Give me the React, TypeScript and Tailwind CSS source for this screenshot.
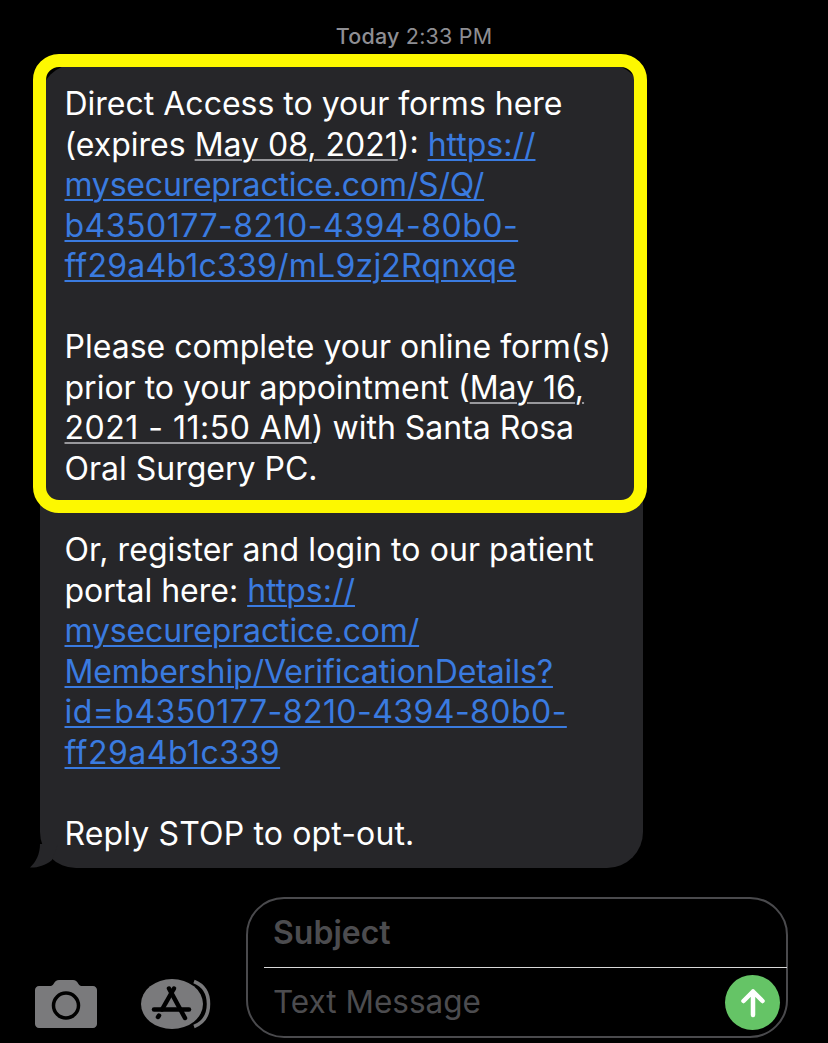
import React from "react";

const Link = ({ children, className = "" }: { children: React.ReactNode; className?: string }) => (
  <span className={`text-[#3a7be0] underline decoration-[2px] underline-offset-[3px] ${className}`}>{children}</span>
);
const DateLink = ({ children, className = "" }: { children: React.ReactNode; className?: string }) => (
  <span className={`underline decoration-[#98989c] decoration-[2px] underline-offset-[3px] ${className}`}>{children}</span>
);

function Camera() {
  return (
    <svg width="62" height="48" viewBox="0 0 62 48" className="block">
      <path
        d="M4 6h11c1.500 0 2.500-.6 3.500-2C20 1.500 21.500 0 24 0h14c2.500 0 4 1.500 5.500 4C44.500 5.400 45.500 6 47 6h11c2.200 0 4 1.800 4 4v34c0 2.200-1.800 4-4 4H4c-2.200 0-4-1.800-4-4V10c0-2.200 1.800-4 4-4z"
        fill="#7a7a7c"
      />
      <circle cx="31" cy="25.500" r="12.500" fill="none" stroke="#000" strokeWidth="3.500" />
    </svg>
  );
}

function AppStore() {
  return (
    <svg width="70" height="50" viewBox="0 0 70 50" className="block">
      <path d="M53 2.500C62 6 67.500 14 67.500 25S62 44 53 47.500" fill="none" stroke="#7a7a7c" strokeWidth="3.500" />
      <ellipse cx="31" cy="25" rx="31" ry="25" fill="#7a7a7c" />
      <g stroke="#000" strokeLinecap="round" fill="none" strokeWidth="4.500">
        <path d="M33 9.500 L21 30.500" />
        <path d="M28 9.500 L44 39" />
        <path d="M13 30.500 H 48" />
        <path d="M18 36.500 L17 38" />
      </g>
    </svg>
  );
}

export default function App() {
  return (
    <div
      className="w-[828px] h-[1043px] bg-black overflow-hidden flex flex-col text-white"
      style={{ fontFamily: "Inter, 'Liberation Sans', sans-serif" }}
    >
      <div className="pt-[23px] h-[64px] text-center text-[21.500px] leading-[26px] text-[#8e8e93] tracking-[0.2px]">
        <span className="font-medium">Today</span> 2:33 PM
      </div>

      <div className="pl-[40px]">
        <div className="relative w-[603px] h-[804px] bg-[#262629] rounded-[36px] pl-[24.500px] pt-[20px] text-[32px] leading-[40.55px] whitespace-nowrap">
          <svg width="30" height="24" viewBox="0 0 30 24" className="absolute left-[-12px] bottom-0">
            <path d="M12 0 C12 10 8 18 2 23.500 C8 24 17 22 24 16 L30 0 Z" fill="#262629" />
          </svg>
          <div className="absolute left-[-7px] top-[-10px] w-[614px] h-[459px] border-[13px] border-[#fdf800] rounded-[26px]" />
          <p>Direct Access to your forms here</p>
          <p>
            (expires <DateLink>May 08, 2021</DateLink>): <Link>https://</Link>
          </p>
          <p><Link className="tracking-[-0.2px]">mysecurepractice.com/S/Q/</Link></p>
          <p><Link className="tracking-[0.5px]">b4350177-8210-4394-80b0-</Link></p>
          <p><Link className="tracking-[0.24px]">ff29a4b1c339/mL9zj2Rqnxqe</Link></p>
          <p>&nbsp;</p>
          <p>Please complete your online form(s)</p>
          <p>
            prior to your appointment (<DateLink>May 16,</DateLink>
          </p>
          <p>
            <DateLink className="tracking-[0.5px]">2021 - 11:50 AM</DateLink>) with Santa Rosa
          </p>
          <p>Oral Surgery PC.</p>
          <p>&nbsp;</p>
          <p className="tracking-[0.08px]">Or, register and login to our patient</p>
          <p>
            portal here: <Link>https://</Link>
          </p>
          <p><Link className="tracking-[-0.15px]">mysecurepractice.com/</Link></p>
          <p><Link className="tracking-[-0.1px]">Membership/VerificationDetails?</Link></p>
          <p><Link className="tracking-[0.45px]">id=b4350177-8210-4394-80b0-</Link></p>
          <p><Link className="tracking-[0.5px]">ff29a4b1c339</Link></p>
          <p>&nbsp;</p>
          <p className="tracking-[0.14px]">Reply STOP to opt-out.</p>
        </div>
      </div>

      <div className="flex items-end mt-[29px] pl-[35px]">
        <div className="mb-[10px]"><Camera /></div>
        <div className="ml-[44px] mb-[9px]"><AppStore /></div>
        <div className="relative ml-[35px] w-[542px] h-[141px] border-[2px] border-[#4a4a4d] rounded-[38px] flex flex-col">
          <div className="h-[68px] pl-[25px] flex items-center font-semibold text-[#4c4c4f] text-[32px]">Subject</div>
          <div className="ml-[16px] mr-[-1px] h-px bg-[#d8d8d8]" />
          <div className="flex-1 pl-[25px] flex items-center text-[#4c4c4f] text-[31.500px]">Text Message</div>
          <div className="absolute right-[6px] bottom-[6px] w-[55px] h-[55px] rounded-full bg-[#65c466] flex items-center justify-center">
            <svg width="26" height="30" viewBox="0 0 26 30">
              <path d="M13 27V3.500 M3.500 13 L13 3.500 L22.500 13" fill="none" stroke="#fff" strokeWidth="4.500" strokeLinecap="round" strokeLinejoin="round" />
            </svg>
          </div>
        </div>
      </div>
    </div>
  );
}
